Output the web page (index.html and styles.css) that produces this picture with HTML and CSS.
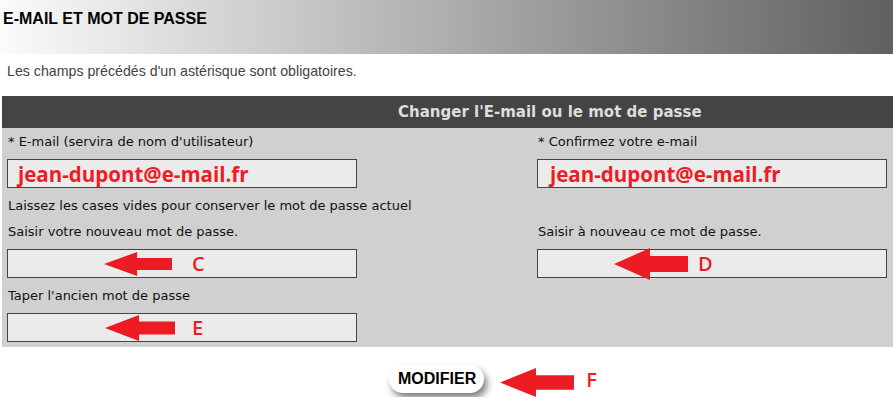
FILE: index.html
```html
<!DOCTYPE html>
<html lang="fr">
<head>
    <meta charset="UTF-8">
    <meta name="viewport" content="width=device-width, initial-scale=1.0">
    <title>E-mail et mot de passe</title>
    <link rel="stylesheet" href="styles.css">
</head>
<body>

<div class="page-head">
    <h1>E-MAIL ET MOT DE PASSE</h1>
</div>

<p class="intro">Les champs précédés d'un astérisque sont obligatoires.</p>

<div class="panel">
    <div class="panel-title">Changer l'E-mail ou le mot de passe</div>

    <div class="panel-body">
        <div class="cell">
            <div class="label">* E-mail (servira de nom d'utilisateur)</div>
            <div class="field field-mail">jean-dupont@e-mail.fr</div>
        </div>
        <div class="cell">
            <div class="label">* Confirmez votre e-mail</div>
            <div class="field field-mail field-mail-right">jean-dupont@e-mail.fr</div>
        </div>

        <div class="note">Laissez les cases vides pour conserver le mot de passe actuel</div>

        <div class="cell">
            <div class="label">Saisir votre nouveau mot de passe.</div>
            <div class="field">
                <svg class="arrow arrow-c" viewBox="0 0 74 30" preserveAspectRatio="none"><polygon points="0,15 36,0 36,7.5 74,7.5 74,22.5 36,22.5 36,30"/></svg>
                <span class="mark mark-c">C</span>
            </div>
        </div>
        <div class="cell">
            <div class="label">Saisir à nouveau ce mot de passe.</div>
            <div class="field">
                <svg class="arrow arrow-d" viewBox="0 0 74 30" preserveAspectRatio="none"><polygon points="0,15 36,0 36,7.5 74,7.5 74,22.5 36,22.5 36,30"/></svg>
                <span class="mark mark-d">D</span>
            </div>
        </div>

        <div class="cell">
            <div class="label">Taper l'ancien mot de passe</div>
            <div class="field">
                <svg class="arrow arrow-e" viewBox="0 0 74 30" preserveAspectRatio="none"><polygon points="0,15 36,0 36,7.5 74,7.5 74,22.5 36,22.5 36,30"/></svg>
                <span class="mark mark-e">E</span>
            </div>
        </div>
    </div>
</div>

<div class="actions">
    <button class="submit">MODIFIER</button>
    <svg class="arrow arrow-f" viewBox="0 0 74 30" preserveAspectRatio="none"><polygon points="0,15 36,0 36,7.5 74,7.5 74,22.5 36,22.5 36,30"/></svg>
    <span class="mark mark-f">F</span>
</div>

</body>
</html>
```

FILE: styles.css
```css
body {
    margin: 0;
    font-family: "Liberation Sans", Arial, sans-serif;
    background-color: #fff;
}

/* Page heading */
.page-head {
    height: 54px;
    background: linear-gradient(to right, #fbfbfb, #606060);
}
.page-head h1 {
    margin: 0;
    padding: 10px 0 0 3px;
    font-size: 16px;
    line-height: 18px;
    font-weight: bold;
    color: #000;
}
.intro {
    margin: 9px 0 17px 7px;
    font-size: 14.2px;
    line-height: 16px;
    color: #444;
}

/* Form panel */
.panel {
    margin-left: 2px;
    background-color: #d0d0d0;
    font-family: "DejaVu Sans", Verdana, sans-serif;
}
.panel-title {
    height: 32px;
    line-height: 32px;
    padding-left: 396px;
    background-color: #444;
    color: #ddd;
    font-size: 15px;
    font-weight: bold;
}
.panel-body {
    display: grid;
    grid-template-columns: 350px 350px;
    column-gap: 180px;
    row-gap: 10px;
    padding: 6px 6px 5px 5px;
}
.label, .note {
    font-size: 13px;
    line-height: 16px;
    color: #111;
    padding-left: 1px;
}
.label {
    margin-bottom: 9px;
}
.note {
    grid-column: 1 / -1;
}
.field {
    display: flex;
    align-items: center;
    height: 27px;
    border: 1px solid #444;
    background-color: #ebebeb;
}
.field-mail {
    padding-left: 10px;
    font-family: "Open Sans", sans-serif;
    font-weight: bold;
    font-size: 20.5px;
    color: #ee1c25;
}
.field-mail-right {
    padding-left: 12px;
}

/* Red annotations */
.arrow {
    flex: none;
    fill: #ed1c24;
}
.mark {
    font-family: "Open Sans", sans-serif;
    font-weight: 600;
    font-size: 20px;
    line-height: 27px;
    color: #ed1c24;
}
.arrow-c { width: 68px; height: 24px; margin: 0 20px 0 96px; }
.arrow-d { width: 74px; height: 32px; margin: 0 10px 0 76px; }
.arrow-e { width: 70px; height: 26px; margin: 0 17px 0 97px; }

/* Submit row */
.actions {
    display: flex;
    align-items: flex-start;
    padding: 18px 0 0 389px;
}
.submit {
    height: 28px;
    padding: 0 8px 0 9px;
    border: none;
    border-radius: 14px;
    background-color: #fff;
    box-shadow: 3px 5px 7px rgba(0, 0, 0, 0.5);
    font-family: "Liberation Sans", Arial, sans-serif;
    font-size: 16px;
    font-weight: bold;
    color: #000;
    cursor: pointer;
}
.arrow-f { width: 74px; height: 29px; margin: 3px 12px 0 16px; }
.mark-f { margin-top: 1px; }
```
